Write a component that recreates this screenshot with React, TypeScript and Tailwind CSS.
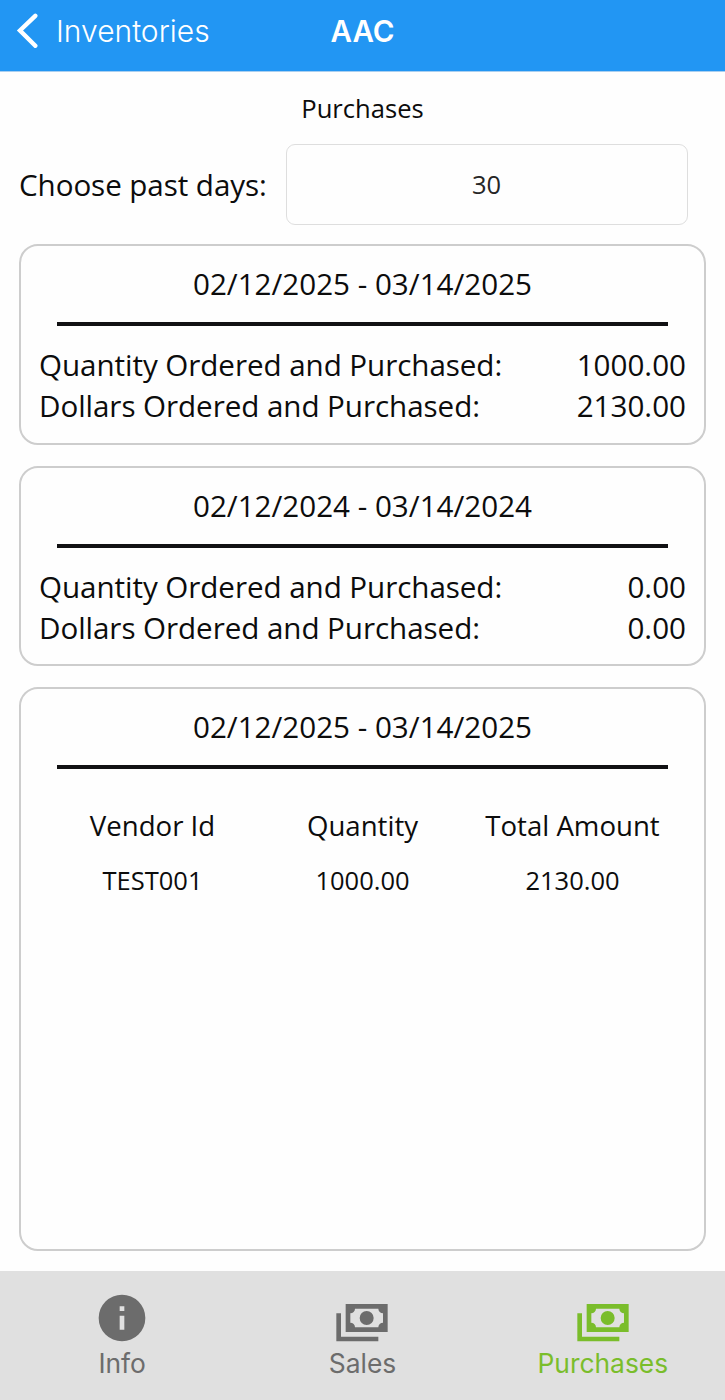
import type { ReactNode } from 'react';

const CASH =
  'M5,6H23V18H5V6M14,9A3,3 0 0,1 17,12A3,3 0 0,1 14,15A3,3 0 0,1 11,12A3,3 0 0,1 14,9M9,8A2,2 0 0,1 7,10V14A2,2 0 0,1 9,16H19A2,2 0 0,1 21,14V10A2,2 0 0,1 19,8H9M1,10H3V20H19V22H1V10Z';
const INFO =
  'M13,9H11V7H13M13,17H11V11H13M12,2A10,10 0 0,0 2,12A10,10 0 0,0 12,22A10,10 0 0,0 22,12A10,10 0 0,0 12,2Z';

function Card({ title, className, children }: { title: string; className: string; children: ReactNode }) {
  return (
    <section className={`rounded-[19px] border-2 border-[#cdcdcd] px-[18px] pt-[17px] ${className}`}>
      <h2 className="text-center text-[29.6px] leading-[41px]">{title}</h2>
      <div className="mx-[18px] mt-[18px] h-1 bg-[#111113]" />
      {children}
    </section>
  );
}

function Totals({ quantity, dollars }: { quantity: string; dollars: string }) {
  return (
    <dl className="mt-[18px] text-[29.6px] leading-[41px]">
      <div className="flex justify-between">
        <dt className="tracking-[-0.06px]">Quantity Ordered and Purchased:</dt>
        <dd>{quantity}</dd>
      </div>
      <div className="flex justify-between">
        <dt className="tracking-[-0.06px]">Dollars Ordered and Purchased:</dt>
        <dd>{dollars}</dd>
      </div>
    </dl>
  );
}

function Tab({ label, path, className }: { label: string; path: string; className: string }) {
  return (
    <button className={`flex flex-1 flex-col items-center pt-[19px] ${className}`}>
      <svg viewBox="0 0 24 24" className="h-[56px] w-[56px]" fill="currentColor">
        <path d={path} />
      </svg>
      <span className="leading-[35px]">{label}</span>
    </button>
  );
}

export default function App() {
  return (
    <div className="flex h-[1400px] w-[725px] flex-col bg-[#fefefe] font-['Open_Sans','Noto_Sans',sans-serif] text-[#0c0c0c]">
      <header className="grid h-[72px] shrink-0 grid-cols-3 border-b border-[#a9cff0] bg-[#2296f3] pt-[11px] font-['Inter',sans-serif] leading-[40px] text-white">
        <button className="flex items-start pl-[16px] text-left">
          <svg viewBox="0 0 22 36" className="mt-[1px] h-[36px] w-[22px]" fill="none" stroke="currentColor" strokeWidth="4.4" strokeLinecap="round" strokeLinejoin="miter">
            <path d="M19.3 3.8 4 18.5 19.3 33.8" />
          </svg>
          <span className="ml-[18px] text-[30px] font-[350]">Inventories</span>
        </button>
        <h1 className="text-center text-[29.5px] font-semibold">AAC</h1>
      </header>
      <main className="flex flex-1 flex-col pr-[19px] pl-[19px]">
        <p className="mt-[19px] text-center text-[25.6px] leading-[36px]">Purchases</p>
        <div className="mt-[17px] flex items-center">
          <label htmlFor="days" className="w-[267px] text-[29.6px] leading-[41px] tracking-[-0.07px]">Choose past days:</label>
          <input id="days" defaultValue="30" className="h-[81px] w-[402px] rounded-[9px] border border-[#dedede] pr-px pb-0.5 text-center text-[25.5px] text-[#252525]" />
        </div>
        <Card title="02/12/2025 - 03/14/2025" className="mt-[19px] h-[201px]">
          <Totals quantity="1000.00" dollars="2130.00" />
        </Card>
        <Card title="02/12/2024 - 03/14/2024" className="mt-[21px] h-[200px]">
          <Totals quantity="0.00" dollars="0.00" />
        </Card>
        <Card title="02/12/2025 - 03/14/2025" className="mt-[21px] h-[564px]">
          <table className="mx-auto mt-[30px] w-[630px] table-fixed text-center">
            <thead>
              <tr className="h-[54px] text-[27.6px]">
                <th className="font-normal">Vendor Id</th>
                <th className="font-normal">Quantity</th>
                <th className="font-normal">Total Amount</th>
              </tr>
            </thead>
            <tbody>
              <tr className="h-[54px] text-[25.5px]">
                <td>TEST001</td>
                <td>1000.00</td>
                <td>2130.00</td>
              </tr>
            </tbody>
          </table>
        </Card>
      </main>
      <nav className="flex h-[129px] shrink-0 bg-[#e0e0e0] px-0.5 font-['Inter',sans-serif] text-[26.4px]">
        <Tab label="Info" path={INFO} className="text-[#6c6c6c]" />
        <Tab label="Sales" path={CASH} className="text-[#6c6c6c]" />
        <Tab label="Purchases" path={CASH} className="text-[#7abd2b]" />
      </nav>
    </div>
  );
}
